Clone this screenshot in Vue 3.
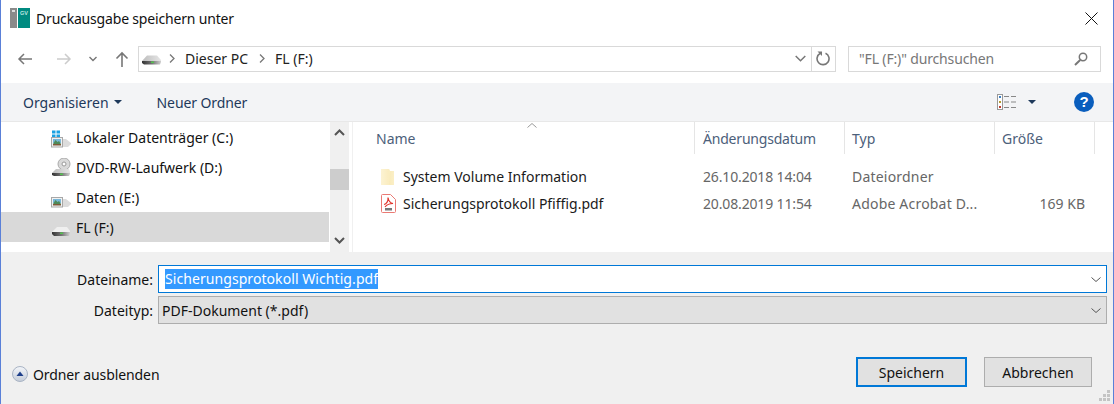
<script setup>
const drives = [
  { name: 'Lokaler Datenträger (C:)', kind: 'win' },
  { name: 'DVD-RW-Laufwerk (D:)', kind: 'dvd' },
  { name: 'Daten (E:)', kind: 'pic' },
  { name: 'FL (F:)', kind: 'usb', selected: true }
]
</script>

<template>
  <div class="win">
    <svg width="0" height="0" class="defs">
      <defs>
        <linearGradient id="front" x1="0" y1="0" x2="1" y2="0">
          <stop offset="0" stop-color="#333" />
          <stop offset=".55" stop-color="#777" />
          <stop offset="1" stop-color="#d0d0d0" />
        </linearGradient>
        <linearGradient id="wedge" x1="0" y1="0" x2="1" y2="0">
          <stop offset="0" stop-color="#bdbdbd" />
          <stop offset="1" stop-color="#e6e6e6" />
        </linearGradient>
        <linearGradient id="fold" x1="0" y1="0" x2="1" y2="0">
          <stop offset="0" stop-color="#fdf6dc" />
          <stop offset=".55" stop-color="#f9eab8" />
          <stop offset="1" stop-color="#fbefc6" />
        </linearGradient>
        <linearGradient id="hg" x1="0" y1="0" x2="0" y2="1">
          <stop offset="0" stop-color="#f4f6fa" />
          <stop offset="1" stop-color="#c4ccd8" />
        </linearGradient>
      </defs>
    </svg>

    <header class="title">
      <svg class="appicon" width="20" height="20" viewBox="0 0 20 20">
        <rect width="7" height="20" fill="#8a8a8a" />
        <rect x="2" y="2" width="3" height="2" fill="#dcdcdc" />
        <rect x="8" width="12" height="20" fill="#008a80" />
        <text x="10" y="6.500" font-size="5.500" font-weight="700" fill="#bfe6e2" font-family="Liberation Sans, sans-serif">GV</text>
      </svg>
      <span class="title-text">Druckausgabe speichern unter</span>
      <svg class="close" width="13" height="13" viewBox="0 0 13 13">
        <path d="M.5.5l12 12M12.5.5l-12 12" stroke="#111" stroke-width="1" fill="none" />
      </svg>
    </header>

    <nav class="nav">
      <svg class="nav-ic back" width="16" height="14" viewBox="0 0 16 14">
        <path d="M15 7H2M7 2L2 7l5 5" stroke="#777" stroke-width="1.500" fill="none" />
      </svg>
      <svg class="nav-ic fwd" width="16" height="14" viewBox="0 0 16 14">
        <path d="M1 7h13M9 2l5 5-5 5" stroke="#ccc" stroke-width="1.500" fill="none" />
      </svg>
      <svg class="nav-ic down" width="8" height="6" viewBox="0 0 8 6">
        <path d="M.5 1L4 4.500 7.500 1" stroke="#777" stroke-width="1.400" fill="none" />
      </svg>
      <svg class="nav-ic up" width="14" height="16" viewBox="0 0 14 16">
        <path d="M7 16V2M1.500 7.500L7 2l5.500 5.500" stroke="#777" stroke-width="1.600" fill="none" />
      </svg>
      <div class="addr">
        <svg class="crumb-drive" width="19" height="10" viewBox="0 0 19 10">
          <path d="M0 6L5 .5h10l4 4.500v1z" fill="url(#wedge)" />
          <path d="M0 6h19v1l-1 2.500H2L0 8z" fill="url(#front)" />
          <rect x="9" y="6.500" width="3" height="1.500" fill="#54c24f" />
        </svg>
        <svg class="chev" width="6" height="9" viewBox="0 0 6 9"><path d="M1 .5l4 4-4 4" stroke="#777" stroke-width="1.300" fill="none" /></svg>
        <span class="crumb">Dieser PC</span>
        <svg class="chev" width="6" height="9" viewBox="0 0 6 9"><path d="M1 .5l4 4-4 4" stroke="#777" stroke-width="1.300" fill="none" /></svg>
        <span class="crumb">FL (F:)</span>
        <svg class="addr-down" width="11" height="7" viewBox="0 0 11 7"><path d="M.7 1l4.800 4.800L10.300 1" stroke="#777" stroke-width="1.500" fill="none" /></svg>
        <div class="refresh">
          <svg width="15" height="15" viewBox="0 0 15 15">
            <path d="M9.500 2.200A6 6 0 1 1 4 2.500" stroke="#777" stroke-width="1.600" fill="none" />
            <path d="M1.500 .5h4.500v4.500z" fill="#777" />
          </svg>
        </div>
      </div>
      <div class="search">
        <span class="search-text">"FL (F:)" durchsuchen</span>
        <svg width="14" height="14" viewBox="0 0 14 14">
          <circle cx="9" cy="5" r="3.700" stroke="#777" stroke-width="1.500" fill="none" />
          <path d="M6.200 8L1 13" stroke="#777" stroke-width="2" />
        </svg>
      </div>
    </nav>

    <div class="toolbar">
      <span class="tool org">Organisieren</span>
      <svg class="caret-small" width="8" height="4" viewBox="0 0 8 4"><path d="M0 0h8L4 4z" fill="#1e395b" /></svg>
      <span class="tool new">Neuer Ordner</span>
      <svg class="views" width="19" height="16" viewBox="0 0 19 16">
        <rect x=".5" y=".5" width="5" height="15" fill="#fff" stroke="#999" />
        <rect x="2" y="2" width="2" height="2" fill="#3a7fc4" />
        <rect x="2" y="7" width="2" height="2" fill="#b59a2c" />
        <rect x="2" y="12" width="2" height="2" fill="#c0392b" />
        <path d="M7 2.500h5M14 2.500h5M7 8h5M14 8h5M7 13.500h5M14 13.500h5" stroke="#888" />
      </svg>
      <svg class="caret-views" width="8" height="4" viewBox="0 0 8 4"><path d="M0 0h8L4 4z" fill="#1e395b" /></svg>
      <div class="help">?</div>
    </div>

    <main class="content">
      <aside class="side">
        <div v-for="d in drives" :key="d.name" class="drive" :class="{ sel: d.selected }">
          <svg class="drive-ic" width="20" height="20" viewBox="0 0 20 20">
            <template v-if="d.kind === 'win'">
              <path d="M0 0h3.500v3H0zM4.500 0H8v3H4.500zM0 4h3.500v3H0zM4.500 4H8v3H4.500z" fill="#1ba1e2" transform="translate(1 2.500)" />
            </template>
            <template v-if="d.kind === 'dvd'">
              <circle cx="13" cy="6" r="6" fill="#d9d9d9" stroke="#aaa" />
              <circle cx="13" cy="6" r="2" fill="#fff" stroke="#999" />
              <path d="M1 15l4-4h13l1 3v1z" fill="url(#wedge)" />
              <path d="M1 15h18v1l-1 2H3l-2-1z" fill="url(#front)" />
              <rect x="9" y="15.500" width="3" height="1.500" fill="#54c24f" />
            </template>
            <template v-if="d.kind === 'win' || d.kind === 'pic'">
              <path d="M9 11h6l5 4v1l-3 3H9z" fill="#dcdcdc" />
              <rect x=".5" y="9.500" width="11" height="9.500" fill="#f2f2f2" stroke="#a8a8a8" />
              <rect x="2" y="11" width="8" height="4" fill="#79b7d8" />
              <path d="M2 16l2.500-4 2 2 1.500-1 2 3z" fill="#4e8a5a" />
              <rect x="2" y="16" width="8" height="1.500" fill="#7d5b3a" />
            </template>
            <template v-if="d.kind === 'usb'">
              <path d="M1 14l5-5h10l3 4v1z" fill="#efefef" />
              <path d="M1 14h18v1l-1 3H3l-2-2z" fill="url(#front)" />
              <rect x="9" y="14.500" width="3" height="1.500" fill="#54c24f" />
            </template>
          </svg>
          <span class="drive-name">{{ d.name }}</span>
        </div>
      </aside>
      <div class="sb">
        <svg class="sb-arrow" width="11" height="7" viewBox="0 0 11 7"><path d="M1 6l4.500-4.500L10 6" stroke="#555" stroke-width="2" fill="none" /></svg>
        <div class="sb-thumb"></div>
        <svg class="sb-arrow sb-bot" width="11" height="7" viewBox="0 0 11 7"><path d="M1 1l4.500 4.500L10 1" stroke="#555" stroke-width="2" fill="none" /></svg>
      </div>
      <section class="files">
        <div class="head">
          <svg class="sort" width="10" height="5" viewBox="0 0 10 5"><path d="M.5 4.500L5 .5l4.500 4" stroke="#999" fill="none" /></svg>
          <div class="col c-name">Name</div>
          <div class="col c-date">Änderungsdatum</div>
          <div class="col c-type">Typ</div>
          <div class="col c-size">Größe</div>
        </div>
        <div class="row first">
          <div class="cell c-name">
            <svg class="f-ic" width="15" height="16" viewBox="0 0 15 16">
              <path d="M0 0h8l1 2h4v14H0z" fill="url(#fold)" />
              <path d="M8 0l1 2-1 14H0V0z" fill="#fbf0c9" opacity=".5" />
            </svg>
            <span class="fname">System Volume Information</span>
          </div>
          <div class="cell c-date meta">26.10.2018 14:04</div>
          <div class="cell c-type meta">Dateiordner</div>
          <div class="cell c-size meta"></div>
        </div>
        <div class="row">
          <div class="cell c-name">
            <svg class="f-ic" width="15" height="19" viewBox="0 0 15 19">
              <path d="M.5 1.500a1 1 0 0 1 1-1h8l5 5v12a1 1 0 0 1-1 1h-12a1 1 0 0 1-1-1z" fill="#fff" stroke="#ea7a74" />
              <path d="M3 10.500c2.500-.5 4.500-3.500 4-7 .5 3 2.500 5.500 5 6-2.500 0-6 1-8 3.500" stroke="#e0352c" stroke-width="1.200" fill="none" />
              <rect x="4" y="14" width="7" height="2.500" fill="#777" />
            </svg>
            <span class="fname">Sicherungsprotokoll Pfiffig.pdf</span>
          </div>
          <div class="cell c-date meta">20.08.2019 11:54</div>
          <div class="cell c-type meta">Adobe Acrobat D...</div>
          <div class="cell c-size meta right">169 KB</div>
        </div>
      </section>
    </main>

    <footer class="bottom">
      <div class="form-row r1">
        <label class="lab">Dateiname:</label>
        <div class="box active">
          <span class="selected">Sicherungsprotokoll Wichtig.pdf</span>
          <svg class="combo" width="10" height="5" viewBox="0 0 10 5"><path d="M.5.5L5 4.500 9.500.5" stroke="#555" fill="none" /></svg>
        </div>
      </div>
      <div class="form-row r2">
        <label class="lab">Dateityp:</label>
        <div class="box plain">
          <span>PDF-Dokument (*.pdf)</span>
          <svg class="combo" width="10" height="5" viewBox="0 0 10 5"><path d="M.5.5L5 4.500 9.500.5" stroke="#555" fill="none" /></svg>
        </div>
      </div>
      <div class="actions">
        <svg class="hide-ic" width="16" height="16" viewBox="0 0 16 16">
          <circle cx="8" cy="8" r="7.500" fill="url(#hg)" stroke="#a9b4c4" />
          <path d="M4.500 10L8 5.500l3.500 4.500z" fill="#1e3f8a" />
        </svg>
        <span class="hide-text">Ordner ausblenden</span>
        <button class="btn primary">Speichern</button>
        <button class="btn">Abbrechen</button>
      </div>
      <svg class="grip" width="12" height="12" viewBox="0 0 12 12">
        <path d="M8 0h3v3H8zM4 4h3v3H4zM8 4h3v3H8zM0 8h3v3H0zM4 8h3v3H4zM8 8h3v3H8z" fill="#c4c4c4" />
      </svg>
    </footer>
  </div>
</template>

<style>
html, body { margin: 0; padding: 0; background: #fff; }
</style>

<style scoped>
.win {
  width: 1114px;
  height: 404px;
  box-sizing: border-box;
  border-left: 1px solid #5a80d8;
  border-right: 1px solid #5a80d8;
  font-family: "Noto Sans", "Open Sans", sans-serif;
  font-size: 14px;
  color: #111;
  display: flex;
  flex-direction: column;
  overflow: hidden;
  background: #fff;
}
svg { display: block; flex: none; }
.defs { position: absolute; }

.title { height: 34px; display: flex; align-items: center; padding-left: 9px; flex: none; }
.appicon { margin-top: 2px; }
.title-text { margin-left: 6px; margin-top: 2px; letter-spacing: -0.18px; }
.close { margin-left: auto; margin-right: 15px; margin-top: 2px; }

.nav { height: 49px; display: flex; align-items: center; flex: none; }
.nav-ic { margin-top: 1px; }
.back { margin-left: 16px; }
.fwd { margin-left: 23px; }
.down { margin-left: 17px; }
.up { margin-left: 18px; }
.addr {
  width: 698px; height: 26px; box-sizing: border-box; margin-left: 9px;
  border: 1px solid #d9d9d9; display: flex; align-items: center;
}
.crumb-drive { margin-left: 3px; margin-top: 2px; }
.chev { margin-left: 8px; }
.crumb { margin-left: 10px; color: #222; }
.crumb + .chev { margin-left: 11px; }
.addr-down { margin-left: auto; margin-right: 5px; }
.refresh { width: 23px; height: 24px; border-left: 1px solid #d9d9d9; display: flex; align-items: center; justify-content: center; }
.search {
  width: 253px; height: 26px; box-sizing: border-box; margin-left: 12px;
  border: 1px solid #d9d9d9; display: flex; align-items: center; padding: 0 12px 0 10px;
  justify-content: space-between;
}
.search-text { color: #777; letter-spacing: -0.15px; }

.toolbar { height: 38px; background: #f3f4f6; display: flex; align-items: center; flex: none; border-bottom: 1px solid #e8e8e8; }
.tool { color: #1e395b; }
.org { margin-left: 22px; }
.caret-small { margin-left: 5px; }
.new { margin-left: 35px; letter-spacing: -0.1px; }
.views { margin-left: auto; }
.caret-views { margin-left: 12px; margin-right: 38px; }
.help {
  width: 20px; height: 20px; border-radius: 50%; background: #0a5ebd; color: #fff; margin-right: 19px;
  font-family: "Liberation Sans", sans-serif; font-weight: 700; font-size: 15px; line-height: 20px; text-align: center;
}

.content { height: 130px; display: flex; flex: none; }
.side { width: 328px; margin-right: 1px; flex: none; }
.drive { height: 30px; display: flex; align-items: center; padding-left: 50px; }
.drive.sel { background: #d9d9d9; }
.drive-ic { margin-top: 1px; }
.drive-name { margin-left: 5px; }
.sb { width: 19px; flex: none; background: #f0f0f0; display: flex; flex-direction: column; align-items: center; }
.sb-arrow { margin-top: 7px; }
.sb-thumb { width: 100%; height: 21px; background: #cdcdcd; margin-top: 33px; }
.sb-bot { margin-top: auto; margin-bottom: 8px; }

.files { flex: 1; margin-left: 3px; border-left: 1px solid #f0f0f0; position: relative; }
.sort { position: absolute; left: 174px; top: 1px; }
.head { height: 32px; display: flex; color: #4c607a; }
.col { height: 100%; box-sizing: border-box; padding-top: 7px; border-right: 1px solid #e5e5e5; padding-left: 8px; }
.col.c-date { letter-spacing: -0.2px; }
.col.c-type, .col.c-size, .cell.c-type { padding-left: 7px; }
.col.c-name { width: 342px; padding-left: 23px; }
.c-name { width: 342px; flex: none; box-sizing: border-box; }
.c-date { width: 150px; flex: none; box-sizing: border-box; }
.c-type { width: 150px; flex: none; box-sizing: border-box; }
.c-size { width: 100px; flex: none; box-sizing: border-box; }
.row { height: 27px; display: flex; align-items: center; }
.row.first { margin-top: 9px; }
.cell { padding-left: 8px; white-space: nowrap; }
.cell.c-name { padding-left: 28px; display: flex; align-items: center; }
.cell.c-date { letter-spacing: -0.15px; }
.cell.c-type { letter-spacing: 0.2px; }
.fname { margin-left: 7px; color: #1a1a1a; }
.meta { color: #666; }
.right { text-align: right; padding-right: 10px; letter-spacing: 0; }

.bottom { flex: 1; background: #f0f0f0; position: relative; }
.form-row { display: flex; align-items: center; height: 28px; }
.r1 { margin-top: 13px; }
.r2 { margin-top: 3px; }
.lab { width: 157px; text-align: right; flex: none; padding-right: 5px; box-sizing: border-box; }
.box { width: 949px; height: 28px; box-sizing: border-box; display: flex; align-items: center; }
.active { border: 1px solid #0078d7; background: #fff; padding-left: 6px; }
.plain { border: 1px solid #adadad; background: #e1e1e1; padding-left: 3px; }
.selected { background: #3399ff; color: #fff; line-height: 20px; letter-spacing: 0.07px; }
.combo { margin-left: auto; margin-right: 5px; }
.actions { display: flex; align-items: center; margin-top: 33px; height: 30px; }
.hide-ic { margin-left: 11px; margin-top: 4px; }
.hide-text { margin-left: 5px; margin-top: 5px; letter-spacing: -0.1px; }
.btn { height: 30px; box-sizing: border-box; font: inherit; color: #111; background: #e1e1e1; border: 1px solid #adadad; padding: 0; }
.primary { width: 111px; margin-left: auto; border: 2px solid #0078d7; }
.btn:not(.primary) { width: 108px; margin-left: 17px; margin-right: 21px; }
.grip { position: absolute; right: 2px; bottom: 2px; }
</style>
